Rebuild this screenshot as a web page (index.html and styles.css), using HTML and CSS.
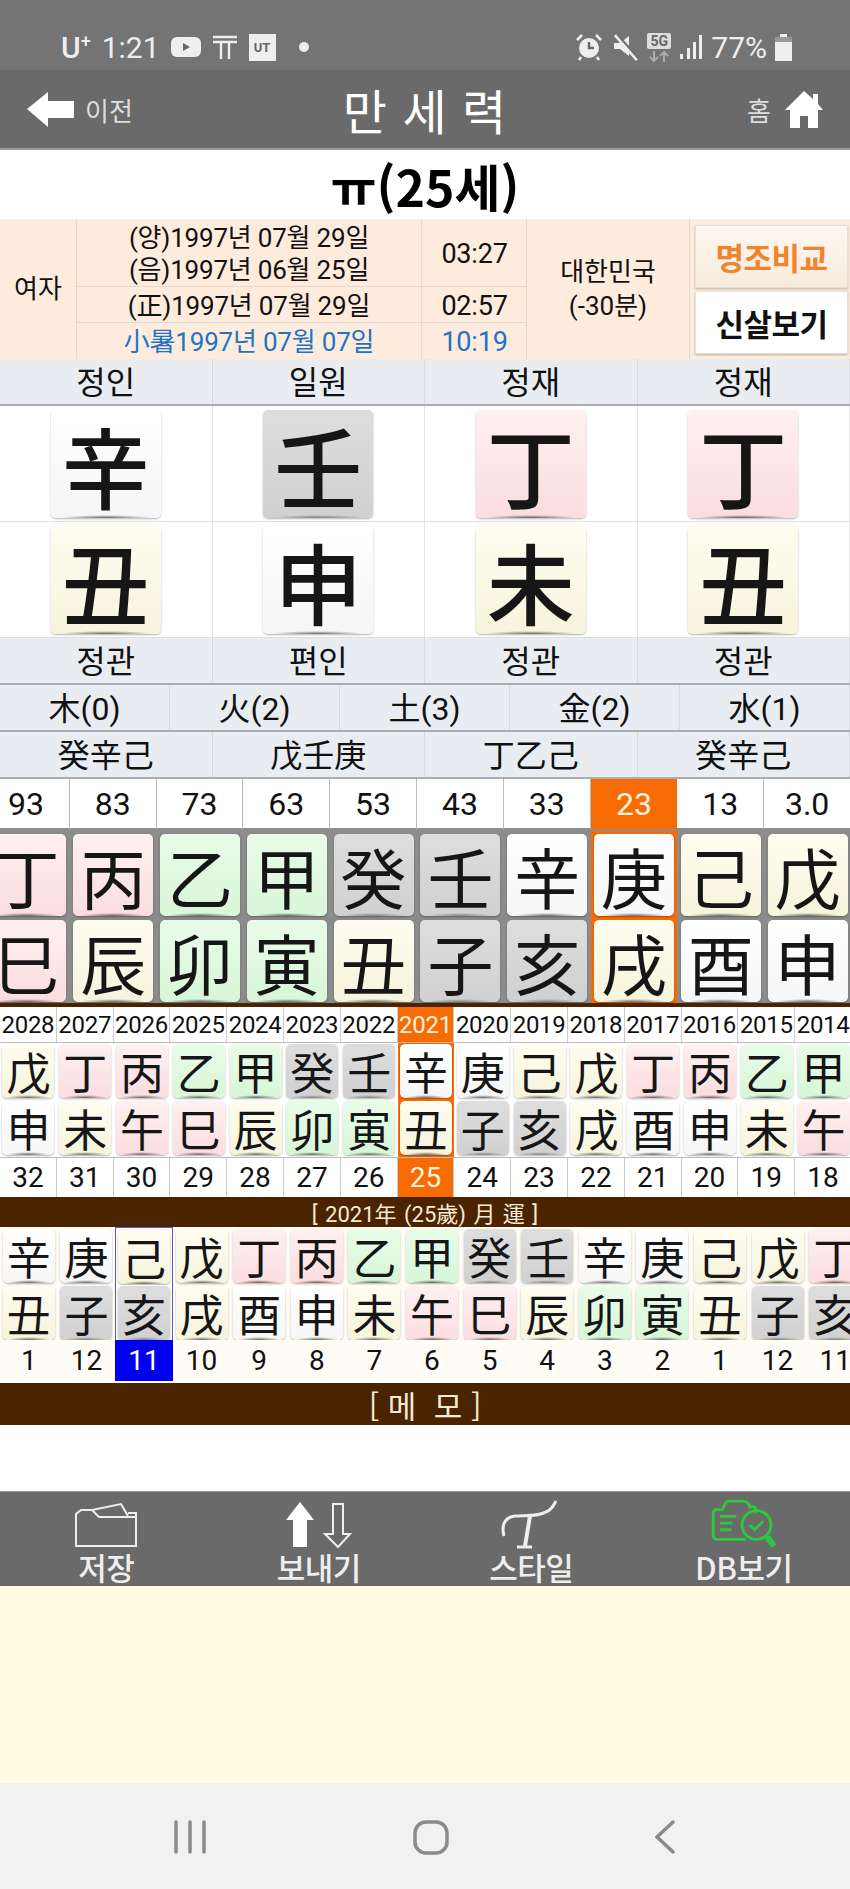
FILE: index.html
```html
<!DOCTYPE html>
<html lang="ko">
<head>
  <meta charset="UTF-8">
  <meta name="viewport" content="width=device-width, initial-scale=1.0">
  <title>만세력</title>
  <link rel="stylesheet" href="styles.css">
</head>
<body>
<div class="screen">
  <div class="status">
    <div class="status-left">
      <span class="carrier">U<sup>+</sup></span>
      <span>1:21</span>
      <svg width="30" height="20" viewBox="0 0 30 20"><rect width="30" height="20" rx="6" fill="#eee"/><path d="M12 6l7 4-7 4z" fill="#666"/></svg>
      <svg width="26" height="26" viewBox="0 0 26 26" fill="none" stroke="#eee" stroke-width="2.4"><path d="M1 3h24M1 8h24M9 8v17M17 8v17"/></svg>
      <span class="ut">UT</span>
      <span class="dot"></span>
    </div>
    <div class="status-right">
      <svg width="28" height="28" viewBox="0 0 28 28"><circle cx="14" cy="15" r="10" fill="#eee"/><path d="M14 9v6h5" stroke="#666" stroke-width="2.4" fill="none"/><path d="M2 7l5-5M26 7l-5-5M6 24l-2 3M22 24l2 3" stroke="#eee" stroke-width="2.6"/></svg>
      <svg width="28" height="28" viewBox="0 0 28 28"><path d="M3 10h6l9-7v20l-9-7H3z" fill="#eee"/><path d="M4 2l22 25" stroke="#eee" stroke-width="3"/><path d="M6 1l22 25" stroke="#6f6f6f" stroke-width="2"/></svg>
      <div class="net">
        <span class="five">5G</span>
        <svg width="22" height="11" viewBox="0 0 22 11" fill="none" stroke="#aaa" stroke-width="2"><path d="M6 0v10M2 6l4 4 4-4M16 11V1M12 5l4-4 4 4"/></svg>
      </div>
      <svg width="24" height="26" viewBox="0 0 24 26" fill="#eee"><rect x="1" y="20" width="3" height="5"/><rect x="8" y="14" width="3" height="11"/><rect x="14" y="8" width="3" height="17"/><rect x="20" y="1" width="3" height="24"/></svg>
      <span>77%</span>
      <svg width="17" height="27" viewBox="0 0 17 27"><path d="M5 0h7v3h5v24H0V3h5z" fill="#eee"/><path d="M0 3h17v5H0z" fill="#999"/></svg>
    </div>
  </div>

  <header class="top">
    <div class="back">
      <svg width="47" height="35" viewBox="0 0 47 35"><path d="M0 17L21 0v9h26v17H21v9z" fill="#fff"/></svg>
      <span>이전</span>
    </div>
    <h1>만 세 력</h1>
    <div class="home">
      <span>홈</span>
      <svg width="38" height="37" viewBox="0 0 38 37"><path d="M19 0l9 8V3h5v10l5 6h-5v18H23V25h-8v12H5V19H0z" fill="#fff"/></svg>
    </div>
  </header>

  <div class="name">ㅠ(25세)</div>

  <div class="info">
    <div class="gender">여자</div>
    <div class="dates">
      <div class="date-row tall"><div class="d-day">(양)1997년 07월 29일<br>(음)1997년 06월 25일</div><div class="d-time">03:27</div></div>
      <div class="date-row"><div class="d-day">(正)1997년 07월 29일</div><div class="d-time">02:57</div></div>
      <div class="date-row blue"><div class="d-day">小暑1997년 07월 07일</div><div class="d-time">10:19</div></div>
    </div>
    <div class="country">대한민국<br>(-30분)</div>
    <div class="btns">
      <div class="btn cmp">명조비교</div>
      <div class="btn">신살보기</div>
    </div>
  </div>

  <div class="row4 label"><div>정인</div><div>일원</div><div>정재</div><div>정재</div></div>
  <div class="row4 pillar">
    <div><span class="card big wht">辛</span></div><div><span class="card big gry">壬</span></div><div><span class="card big pnk">丁</span></div><div><span class="card big pnk">丁</span></div>
  </div>
  <div class="row4 pillar">
    <div><span class="card big crm">丑</span></div><div><span class="card big wht">申</span></div><div><span class="card big crm">未</span></div><div><span class="card big crm">丑</span></div>
  </div>
  <div class="row4 label"><div>정관</div><div>편인</div><div>정관</div><div>정관</div></div>
  <div class="row5 label"><div>木(0)</div><div>火(2)</div><div>土(3)</div><div>金(2)</div><div>水(1)</div></div>
  <div class="row4 label"><div>癸辛己</div><div>戊壬庚</div><div>丁乙己</div><div>癸辛己</div></div>

  <div class="luck ages">
    <div>93</div><div>83</div><div>73</div><div>63</div><div>53</div><div>43</div><div>33</div><div class="on">23</div><div>13</div><div>3.0</div>
  </div>
  <div class="luck cards stems">
    <div><span class="card mid pnk">丁</span></div><div><span class="card mid pnk">丙</span></div><div><span class="card mid grn">乙</span></div><div><span class="card mid grn">甲</span></div><div><span class="card mid gry">癸</span></div><div><span class="card mid gry">壬</span></div><div><span class="card mid wht">辛</span></div><div class="on"><span class="card mid wht">庚</span></div><div><span class="card mid crm">己</span></div><div><span class="card mid crm">戊</span></div>
  </div>
  <div class="luck cards branches">
    <div><span class="card mid pnk">巳</span></div><div><span class="card mid crm">辰</span></div><div><span class="card mid grn">卯</span></div><div><span class="card mid grn">寅</span></div><div><span class="card mid crm">丑</span></div><div><span class="card mid gry">子</span></div><div><span class="card mid gry">亥</span></div><div class="on"><span class="card mid crm">戌</span></div><div><span class="card mid wht">酉</span></div><div><span class="card mid wht">申</span></div>
  </div>

  <div class="rule"></div>

  <div class="years nums y-head">
    <div>2028</div><div>2027</div><div>2026</div><div>2025</div><div>2024</div><div>2023</div><div>2022</div><div class="on">2021</div><div>2020</div><div>2019</div><div>2018</div><div>2017</div><div>2016</div><div>2015</div><div>2014</div>
  </div>
  <div class="years y-stem">
    <div><span class="card sml crm">戊</span></div><div><span class="card sml pnk">丁</span></div><div><span class="card sml pnk">丙</span></div><div><span class="card sml grn">乙</span></div><div><span class="card sml grn">甲</span></div><div><span class="card sml gry">癸</span></div><div><span class="card sml gry">壬</span></div><div class="on"><span class="card sml wht">辛</span></div><div><span class="card sml wht">庚</span></div><div><span class="card sml crm">己</span></div><div><span class="card sml crm">戊</span></div><div><span class="card sml pnk">丁</span></div><div><span class="card sml pnk">丙</span></div><div><span class="card sml grn">乙</span></div><div><span class="card sml grn">甲</span></div>
  </div>
  <div class="years y-branch">
    <div><span class="card sml wht">申</span></div><div><span class="card sml crm">未</span></div><div><span class="card sml pnk">午</span></div><div><span class="card sml pnk">巳</span></div><div><span class="card sml crm">辰</span></div><div><span class="card sml grn">卯</span></div><div><span class="card sml grn">寅</span></div><div class="on"><span class="card sml crm">丑</span></div><div><span class="card sml gry">子</span></div><div><span class="card sml gry">亥</span></div><div><span class="card sml crm">戌</span></div><div><span class="card sml wht">酉</span></div><div><span class="card sml wht">申</span></div><div><span class="card sml crm">未</span></div><div><span class="card sml pnk">午</span></div>
  </div>
  <div class="years nums y-age">
    <div>32</div><div>31</div><div>30</div><div>29</div><div>28</div><div>27</div><div>26</div><div class="on">25</div><div>24</div><div>23</div><div>22</div><div>21</div><div>20</div><div>19</div><div>18</div>
  </div>

  <div class="bar bar-year">[ 2021年 (25歲) 月 運 ]</div>

  <div class="months m-stem">
    <div><span class="card sml wht">辛</span></div><div><span class="card sml wht">庚</span></div><div class="sel"><span class="card sml crm">己</span></div><div><span class="card sml crm">戊</span></div><div><span class="card sml pnk">丁</span></div><div><span class="card sml pnk">丙</span></div><div><span class="card sml grn">乙</span></div><div><span class="card sml grn">甲</span></div><div><span class="card sml gry">癸</span></div><div><span class="card sml gry">壬</span></div><div><span class="card sml wht">辛</span></div><div><span class="card sml wht">庚</span></div><div><span class="card sml crm">己</span></div><div><span class="card sml crm">戊</span></div><div><span class="card sml pnk">丁</span></div>
  </div>
  <div class="months m-branch">
    <div><span class="card sml crm">丑</span></div><div><span class="card sml gry">子</span></div><div class="sel"><span class="card sml gry">亥</span></div><div><span class="card sml crm">戌</span></div><div><span class="card sml wht">酉</span></div><div><span class="card sml wht">申</span></div><div><span class="card sml crm">未</span></div><div><span class="card sml pnk">午</span></div><div><span class="card sml pnk">巳</span></div><div><span class="card sml crm">辰</span></div><div><span class="card sml grn">卯</span></div><div><span class="card sml grn">寅</span></div><div><span class="card sml crm">丑</span></div><div><span class="card sml gry">子</span></div><div><span class="card sml gry">亥</span></div>
  </div>
  <div class="months nums m-num">
    <div>1</div><div>12</div><div class="cur">11</div><div>10</div><div>9</div><div>8</div><div>7</div><div>6</div><div>5</div><div>4</div><div>3</div><div>2</div><div>1</div><div>12</div><div>11</div>
  </div>

  <div class="bar bar-memo">[ 메 &nbsp;모 ]</div>
  <div class="blank"></div>

  <nav class="tools">
    <div class="tool">
      <svg width="64" height="44" viewBox="0 0 64 44" fill="none" stroke="#eee" stroke-width="2"><path d="M2 43V11l5-4h11l7 7h37v29zM18 7L47 1l7 12M54 10h8v4"/></svg>
      <span>저장</span>
    </div>
    <div class="tool">
      <svg width="66" height="46" viewBox="0 0 66 46"><path d="M14 0l14 18h-7v27H7V18H0z" fill="#fff"/><path d="M47 2h10v30h7L52 45 39 32h8z" fill="none" stroke="#eee" stroke-width="2"/></svg>
      <span>보내기</span>
    </div>
    <div class="tool">
      <svg width="62" height="50" viewBox="0 0 62 50" fill="none" stroke="#eee"><path d="M4 36C1 25 5 17 15 16s23 1 33-5c5-3 6-7 8-10" stroke-width="3"/><path d="M30 16L25 46" stroke-width="4"/><path d="M17 47h15" stroke-width="3"/></svg>
      <span>스타일</span>
    </div>
    <div class="tool">
      <svg width="68" height="52" viewBox="0 0 68 52" fill="none" stroke="#2bc93c" stroke-width="3"><path d="M36 41H6q-4 0-4-4V14q0-4 4-4h6M46 14V10q0-3-3-3h-3Q38 1 33 1H19q-5 0-7 9"/><path d="M9 17h17M9 24h13M9 31h12"/><circle cx="47" cy="26" r="15"/><path d="M40 26l5 5 9-9"/><path d="M58 38l7 10" stroke-width="6"/></svg>
      <span>DB보기</span>
    </div>
  </nav>

  <div class="cream"></div>

  <div class="softkeys">
    <svg width="32" height="34" viewBox="0 0 32 34" fill="none" stroke="#8a8a8a" stroke-width="3.5" stroke-linecap="round"><path d="M2 2v30M16 2v30M30 2v30"/></svg>
    <svg width="36" height="35" viewBox="0 0 36 35" fill="none" stroke="#8a8a8a" stroke-width="3.5"><rect x="2" y="2" width="32" height="31" rx="11"/></svg>
    <svg width="20" height="34" viewBox="0 0 20 34" fill="none" stroke="#8a8a8a" stroke-width="3.5" stroke-linecap="round"><path d="M18 2L2 17l16 15"/></svg>
  </div>
</div>
</body>
</html>
```

FILE: styles.css
```css
* {
  box-sizing: border-box;
}

body {
  margin: 0;
  background: #fff;
  font-family: "Roboto", "Noto Sans CJK KR", sans-serif;
  color: #111;
}

.screen {
  width: 850px;
  height: 1889px;
  overflow: hidden;
  display: flex;
  flex-direction: column;
}

/* phone status bar */
.status {
  height: 70px;
  flex: none;
  background: #747474;
  color: #eee;
  font-size: 30px;
  padding: 24px 58px 0 61px;
  display: flex;
  justify-content: space-between;
  align-items: center;
}

.status-left,
.status-right {
  display: flex;
  align-items: center;
  gap: 11px;
}

.status-right {
  gap: 8px;
}

.carrier {
  font-weight: 500;
}

.carrier sup {
  font-size: 18px;
  line-height: 0;
}

.ut {
  width: 27px;
  height: 27px;
  background: #eee;
  color: #666;
  font-size: 13px;
  font-weight: 700;
  display: flex;
  align-items: center;
  justify-content: center;
}

.dot {
  width: 10px;
  height: 10px;
  border-radius: 50%;
  background: #eee;
  margin-left: 12px;
}

.net {
  display: flex;
  flex-direction: column;
  align-items: center;
  gap: 2px;
}

.five {
  width: 24px;
  height: 16px;
  border-radius: 2px;
  background: #ddd;
  color: #666;
  font-size: 14px;
  font-weight: 700;
  line-height: 16px;
  text-align: center;
}

/* title bar */
.top {
  height: 80px;
  flex: none;
  background: #6a6a6a;
  border-bottom: 2px solid #999;
  color: #fff;
  padding: 0 27px;
  display: grid;
  grid-template-columns: 1fr auto 1fr;
  align-items: center;
}

.top h1 {
  margin: 0;
  font-family: "Noto Sans CJK KR", sans-serif;
  font-size: 48px;
  font-weight: 400;
  letter-spacing: 1px;
}

.back,
.home {
  display: flex;
  align-items: center;
  gap: 11px;
  font-family: "Noto Sans CJK KR", sans-serif;
  font-size: 26px;
  color: #ddd;
}

.home {
  justify-content: flex-end;
  gap: 14px;
}

.name {
  height: 69px;
  flex: none;
  display: flex;
  align-items: center;
  justify-content: center;
  font-family: "Noto Sans CJK KR", sans-serif;
  font-size: 50px;
  font-weight: 700;
  color: #000;
}

/* birth info block */
.info {
  height: 140px;
  flex: none;
  background: #fdecdd;
  display: grid;
  grid-template-columns: 77px 450px 163px 1fr;
  font-size: 26px;
  text-align: center;
}

.info > div {
  border-right: 1px solid #e6d8cc;
}

.gender,
.country {
  display: flex;
  align-items: center;
  justify-content: center;
  line-height: 34px;
}

.dates {
  display: flex;
  flex-direction: column;
}

.date-row {
  flex: 1 1 36px;
  display: grid;
  grid-template-columns: 345px 105px;
  border-bottom: 1px solid #e6d8cc;
  line-height: 32px;
  letter-spacing: -0.2px;
}

.date-row:last-child {
  border-bottom: 0;
}

.date-row.tall {
  flex: 0 0 68px;
}

.date-row > div {
  display: flex;
  align-items: center;
  justify-content: center;
  padding-top: 2px;
}

.d-day {
  border-right: 1px solid #e6d8cc;
}

.d-time {
  font-size: 27px;
}

.blue {
  color: #2373c4;
}

.info > .btns {
  border-right: 0;
  padding: 6px 2px 5px 5px;
  display: flex;
  flex-direction: column;
  gap: 3px;
}

.btn {
  flex: 1;
  background: #fff;
  border: 1px solid #e8e0d8;
  box-shadow: 0 1px 2px rgba(0, 0, 0, 0.25);
  display: flex;
  align-items: center;
  justify-content: center;
  font-family: "Noto Sans CJK KR", sans-serif;
  font-size: 31px;
  font-weight: 700;
  letter-spacing: -0.5px;
}

.cmp {
  background: linear-gradient(#fff8f0, #f7eadc);
  color: #f0832e;
}

/* four pillars */
.row4,
.row5 {
  flex: none;
  display: grid;
  grid-template-columns: repeat(4, 1fr);
}

.row5 {
  grid-template-columns: repeat(5, 1fr);
}

.label {
  height: 47px;
  background: #e9edf2;
  border-bottom: 2px solid #a9adb2;
  font-size: 32px;
  line-height: 42px;
  text-align: center;
}

.label > div {
  border-right: 1px solid #d6dade;
  height: 45px;
  padding-top: 3px;
}

.pillar {
  height: 116px;
  border-bottom: 1px solid #ddd;
}

.pillar > div {
  border-right: 1px solid #e4e4e4;
  display: flex;
  align-items: center;
  justify-content: center;
}

.card {
  display: flex;
  align-items: center;
  justify-content: center;
  border-radius: 5px;
  font-family: "Noto Sans CJK TC", "Noto Sans CJK KR", sans-serif;
  line-height: 1;
  color: #161616;
  box-shadow: 0 1px 2px rgba(0, 0, 0, 0.3);
}

.big {
  width: 110px;
  height: 108px;
  font-size: 88px;
  font-weight: 500;
}

.mid {
  width: 80px;
  height: 82px;
  font-size: 66px;
}

.sml {
  width: 52px;
  height: 54px;
  font-size: 44px;
}

.wht {
  background: radial-gradient(ellipse 42% 3px at 50% 100%, rgba(0, 0, 0, 0.6), transparent), linear-gradient(#fff, #f6f6f6);
}

.gry {
  background: radial-gradient(ellipse 42% 3px at 50% 100%, rgba(0, 0, 0, 0.4), transparent), linear-gradient(#dedede, #d0d0d0);
}

.pnk {
  background: radial-gradient(ellipse 42% 3px at 50% 100%, rgba(0, 0, 0, 0.6), transparent), linear-gradient(#fff0f1, #fbdde0);
}

.grn {
  background: radial-gradient(ellipse 42% 3px at 50% 100%, rgba(0, 0, 0, 0.6), transparent), linear-gradient(#e8fce8, #d8f6d8);
}

.crm {
  background: radial-gradient(ellipse 42% 3px at 50% 100%, rgba(0, 0, 0, 0.6), transparent), linear-gradient(#fefdf0, #f6f4dc);
}

/* ten year luck, runs off the left edge */
.luck {
  flex: none;
  width: 868px;
  margin-left: -17px;
  display: grid;
  grid-template-columns: repeat(10, 1fr);
  text-align: center;
}

.ages {
  height: 52px;
  font-size: 32px;
  line-height: 50px;
  border-bottom: 3px solid #8c8c8c;
}

.ages > div {
  border-right: 1px solid #bbb;
}

.luck .on {
  background: #f76b05;
  color: #fff3e0;
  border-right: 0;
}

.cards {
  background: #8c8c8c;
}

.cards > div {
  display: flex;
  align-items: center;
  justify-content: center;
}

.stems {
  height: 88px;
}

.branches {
  height: 84px;
}

.rule {
  height: 4px;
  flex: none;
  background: #4a2400;
}

/* yearly and monthly rows */
.years {
  flex: none;
  width: 852px;
  display: grid;
  grid-template-columns: repeat(15, 1fr);
  text-align: center;
}

.years > div,
.months > div {
  display: flex;
  align-items: center;
  justify-content: center;
}

.years .on {
  background: #f76b05;
  color: #fff3e0;
}

.nums {
  border-bottom: 1px solid #bbb;
}

.nums > div {
  border-right: 1px solid #ccc;
}

.y-head {
  height: 36px;
  font-size: 24px;
  letter-spacing: -0.3px;
}

.y-stem {
  height: 56px;
}

.y-branch {
  height: 58px;
}

.y-age {
  height: 40px;
  font-size: 28px;
  border-top: 1px solid #bbb;
  border-bottom: 0;
}

.bar {
  flex: none;
  background: #4a2400;
  color: #f6ead6;
  display: flex;
  align-items: center;
  justify-content: center;
  font-family: "Roboto", "Noto Sans CJK TC", sans-serif;
}

.bar-year {
  height: 30px;
  font-size: 22px;
  word-spacing: 2px;
}

.bar-memo {
  height: 42px;
  font-family: "Noto Sans CJK KR", sans-serif;
  font-size: 31px;
  margin-top: 2px;
}

.months {
  flex: none;
  width: 864px;
  background: #fffcf6;
  display: grid;
  grid-template-columns: repeat(15, 1fr);
  text-align: center;
}

.months .sel {
  border-left: 1px solid #5a5ad0;
  border-right: 1px solid #5a5ad0;
}

.m-stem {
  height: 58px;
}

.m-stem .sel {
  border-top: 1px solid #5a5ad0;
}

.m-branch {
  height: 55px;
}

.months.nums {
  border-bottom: 0;
}

.months.nums > div {
  border-right: 0;
}

.m-num {
  height: 41px;
  font-size: 28px;
}

.months .cur {
  background: #0000ee;
  color: #fff;
}

.blank {
  height: 66px;
  flex: none;
  background: #fff;
}

/* bottom toolbar */
.tools {
  height: 95px;
  flex: none;
  background: #6a6a6a;
  display: grid;
  grid-template-columns: repeat(4, 1fr);
  border-top: 1px solid #999;
}

.tool {
  display: flex;
  flex-direction: column;
  align-items: center;
  padding-top: 8px;
  color: #eee;
  font-family: "Noto Sans CJK KR", sans-serif;
  font-size: 31px;
  font-weight: 500;
  letter-spacing: -0.5px;
}

.tool svg {
  height: 50px;
}

.tool span {
  line-height: 34px;
}

.cream {
  height: 197px;
  flex: none;
  background: #fffce2;
}

.softkeys {
  flex: 1;
  background: #f1f1f1;
  display: flex;
  align-items: flex-start;
  justify-content: space-between;
  padding: 37px 175px 0 174px;
}
```
